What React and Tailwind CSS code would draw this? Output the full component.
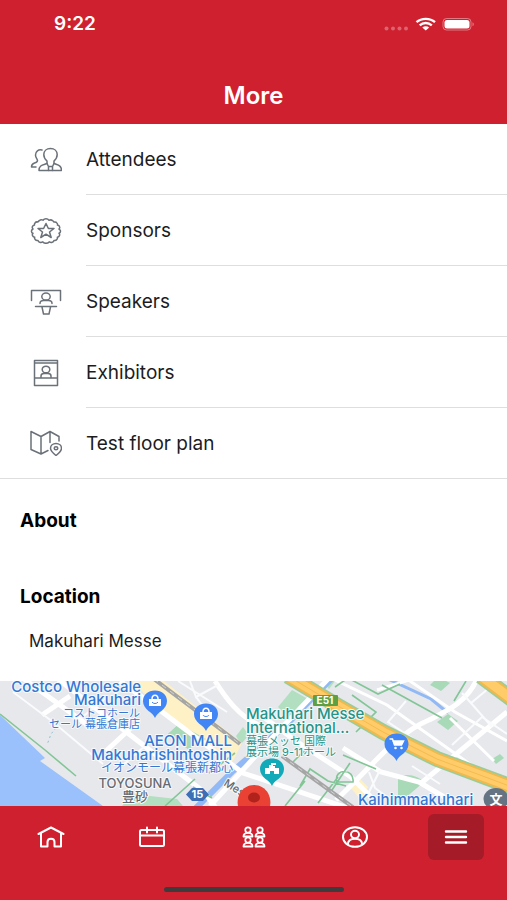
import { clsx } from 'clsx';

const svgProps = {
  fill: 'none',
  stroke: 'currentColor',
  strokeLinecap: 'round',
  strokeLinejoin: 'round',
  'aria-hidden': true,
};

function AttendeesIcon() {
  return (
    <svg viewBox="0 0 32 26" className="w-8 h-[26px]" strokeWidth="1.5" {...svgProps}>
      <path d="M20.500 1.500c-4 0-6.700 2.600-6.700 6 0 3.300 1.500 5 3.200 6.500v2.500c-4 1.500-8 1.500-8 7h22.500c0-5.500-4-5.500-7.500-7V14c1.700-1.500 3.200-3.200 3.200-6.500 0-3.400-2.700-6-6.700-6z" />
      <path d="M17 16.500l1.500 3v4M24 16.500l-1.500 3v4M18.500 19.500h4" />
      <path d="M12 3C8.500 2 5.500 4.500 5.500 8c0 2.500 1.500 3.500 2 5.500 0 1.500-1 2-3 2.500-2.500.8-3 1.800-3 4H6" />
    </svg>
  );
}

function SponsorsIcon() {
  return (
    <svg viewBox="0 0 32 26" className="w-8 h-[26px]" strokeWidth="1.5" {...svgProps}>
      <path d="M16 .8q2 0 3 1.500q2-1 3.500.3q1 .5 1.500 1.500q2-.5 3 1q.8 1 .5 2q2 .5 2.200 2q.2 1-.7 2q1.800 1 1.500 2.200q0 1.500-1.500 2q1 1 .5 2.200q-.4 1.500-2.200 1.700q.5 1.300-.5 2.300q-1 1.300-2.800.9q-.5 1.500-1.800 1.900q-1.500.5-3-.4q-1 1.400-3.200 1.400t-3.200-1.400q-1.500.9-3 .4q-1.300-.4-1.800-1.900q-1.800.4-2.800-.9q-1-1-.5-2.300q-1.800-.2-2.200-1.700q-.5-1.200.5-2.200Q1.500 15 1.500 13.500q-.3-1.500 1.500-2.500q-.9-1-.7-2q.2-1.500 2.200-2q-.3-1 .5-2q1-1.500 3-1q.5-1 1.500-1.500q1.500-1.300 3.500-.3q1-1.400 3-1.400z" />
      <path d="M16 5.500l2.400 5h5.600l-4.500 3.500 1.700 5.500-5.200-3.300-5.200 3.300 1.700-5.500L8 10.500h5.600z" />
    </svg>
  );
}

function SpeakersIcon() {
  return (
    <svg viewBox="0 0 32 26" className="w-8 h-[26px]" strokeWidth="1.5" {...svgProps}>
      <path d="M1.500 11.500V1.500h29v10" />
      <ellipse cx="16" cy="7.500" rx="4.200" ry="3.600" />
      <path d="M10 14.500c0-2 1-3 3.500-3h5c2.500 0 3.500 1 3.500 3M5.500 17.500h21M12 18l1.500 7h5.500l1.500-7" />
    </svg>
  );
}

function ExhibitorsIcon() {
  return (
    <svg viewBox="0 0 32 28" className="w-8 h-7" strokeWidth="1.500" {...svgProps}>
      <path d="M4.500 1.500h23v25h-23zM4.500 4h23M4.500 19h23" />
      <ellipse cx="16" cy="10.500" rx="3.800" ry="3.300" />
      <path d="M11 18.500V17c0-1.800 1-2.500 3-2.500h4c2 0 3 .7 3 2.500v1.500" />
    </svg>
  );
}

function FloorPlanIcon() {
  return (
    <svg viewBox="0 0 32 26" className="w-8 h-[26px]" strokeWidth="1.500" {...svgProps}>
      <path d="M18 20.500l-7 3.500-10-4.500V1.500l10 5 9-5 9 5V11M11 6.500V24M20 1.500v11" />
      <path d="M26 13.500c-3 0-5.500 2-5.500 4.800 0 2.700 3 5.200 5.500 7.200 2.500-2 5.500-4.500 5.500-7.200 0-2.800-2.500-4.800-5.500-4.800z" />
      <ellipse cx="26" cy="18.300" rx="1.800" ry="1.500" />
    </svg>
  );
}

function HomeIcon() {
  return (
    <svg viewBox="0 0 28 24" className="w-7 h-6" strokeWidth="2" {...svgProps}>
      <path d="M1.500 9L14 2.500 26.500 9M4 8v13.500h6.500V17c0-4.500 7-4.500 7 0v4.500H24V8" />
    </svg>
  );
}

function CalendarIcon() {
  return (
    <svg viewBox="0 0 28 24" className="w-7 h-6" strokeWidth="2" {...svgProps}>
      <rect x="2" y="5" width="24" height="16" rx="1.500" />
      <path d="M2 10.500h24M9 2.500v5M19 2.500v5" />
    </svg>
  );
}

function Person({ x, y }) {
  return (
    <g transform={`translate(${x} ${y})`}>
      <ellipse cx="0" cy="3" rx="2.700" ry="2.600" />
      <path d="M-4.500 9.500c0-2.500 1.500-3.700 4.500-3.700s4.500 1.200 4.500 3.700z" />
    </g>
  );
}

function NetworkIcon() {
  return (
    <svg viewBox="0 0 28 24" className="w-7 h-6" strokeWidth="1.800" {...svgProps}>
      <Person x={8} y={2} />
      <Person x={20} y={2} />
      <Person x={8} y={12} />
      <Person x={20} y={12} />
    </svg>
  );
}

function ProfileIcon() {
  return (
    <svg viewBox="0 0 28 24" className="w-7 h-6" strokeWidth="2" {...svgProps}>
      <ellipse cx="14" cy="12" rx="12" ry="9.800" />
      <ellipse cx="14" cy="9.500" rx="4" ry="3.700" />
      <path d="M6.800 19c.4-3.500 2.800-5.200 7.200-5.200s6.800 1.700 7.200 5.200" />
    </svg>
  );
}

function MenuIcon() {
  return (
    <svg viewBox="0 0 28 24" className="w-7 h-6" strokeWidth="2.400" {...svgProps}>
      <path d="M4 6.500h20M4 12h20M4 17.500h20" />
    </svg>
  );
}

const links = [
  { label: 'Attendees', icon: AttendeesIcon },
  { label: 'Sponsors', icon: SponsorsIcon },
  { label: 'Speakers', icon: SpeakersIcon },
  { label: 'Exhibitors', icon: ExhibitorsIcon },
  { label: 'Test floor plan', icon: FloorPlanIcon },
];

const tabs = [
  { label: 'Home', icon: HomeIcon },
  { label: 'Agenda', icon: CalendarIcon },
  { label: 'Networking', icon: NetworkIcon },
  { label: 'Profile', icon: ProfileIcon },
  { label: 'More', icon: MenuIcon, active: true },
];

function StatusBar() {
  return (
    <div className="flex items-center justify-between pl-[54px] pr-8 h-12">
      <span className="text-[19px] leading-6 font-semibold">9:22</span>
      <svg viewBox="0 0 91 16" className="w-[91px] h-4" fill="currentColor" aria-hidden="true">
        <g opacity="0.3">
          <circle cx="2.500" cy="12.500" r="2" />
          <circle cx="9" cy="12.500" r="2" />
          <circle cx="15.500" cy="12.500" r="2" />
          <circle cx="22" cy="12.500" r="2" />
        </g>
        <g fill="none" stroke="currentColor" strokeWidth="2.400">
          <path d="M32.500 6.200c5-4.400 13.500-4.400 18.500 0" />
          <path d="M35.700 9.300c3.500-3 8.600-3 12.100 0" />
        </g>
        <path d="M38.300 11.400c2-1.700 4.900-1.700 6.900 0L41.750 14.500z" />
        <rect x="59" y="2.500" width="28" height="11.500" rx="3.500" fill="none" stroke="currentColor" opacity="0.4" />
        <rect x="60.500" y="4" width="25" height="8.500" rx="2.500" />
        <path d="M88.500 6.300c1.800.6 1.800 3.400 0 4z" opacity="0.4" />
      </svg>
    </div>
  );
}

function Pin({ x, y, color, children }) {
  return (
    <g transform={`translate(${x} ${y})`}>
      <path d="M0 17C-2 11-12 9-12 0c0-6 5-10.500 12-10.500S12-6 12 0C12 9 2 11 0 17z" fill={color} />
      {children}
    </g>
  );
}

function Bag() {
  return (
    <g>
      <path d="M-6-2H6V5H-6z" fill="#fff" />
      <path d="M-3-2c0-5 6-5 6 0" fill="none" stroke="#fff" strokeWidth="1.500" />
      <path d="M-3 1c1 2 5 2 6 0" fill="none" stroke="#4285f4" />
    </g>
  );
}

function VenueMap() {
  return (
    <svg
      viewBox="0 0 507 125"
      preserveAspectRatio="xMidYMid slice"
      className="block w-full h-[125px] bg-[#e6e8ec] font-['Inter','Noto_Sans_CJK_JP',sans-serif]"
      role="img"
      aria-label="Map of Makuhari Messe"
    >
      {/* water and parks */}
      <path d="M0 34L45 77 40 80 103 125H0z" fill="#9ac1fb" />
      <path d="M122 125l10-12 45 5 6 7z" fill="#b2dfc0" />
      <path d="M168 53l11-10 27 15-18 10z" fill="#a9dab8" />
      <path d="M278 26l14-17 16 9-18 20z" fill="#b2dfc0" />
      <path d="M398 97c8-6 20-2 26 4l-26 22z" fill="#a9dab8" />
      <path d="M437 41l11-8 10 7-10 9zM430 4l8-8 12 6-9 8zM492 78l8-5 4 4-8 6z" fill="#a9dab8" />
      <path d="M236 55l7-9 6 8-8 9zM323 0h12l-6 8z" fill="#b2dfc0" />
      {/* canals */}
      <path d="M333-4L288 42 233 90 193 130" fill="none" stroke="#91b9f5" strokeWidth="6" />
      <path d="M388-2l43 20 17 14" fill="none" stroke="#91b9f5" strokeWidth="3" />
      {/* station area */}
      <path d="M130 0h34l78 62-9 18-31-18-35-30z" fill="#fff1c6" />
      <path d="M168 53l11-10 27 15-18 10z" fill="#a9dab8" />
      <path d="M350 106l10-8 8 8-8 12z" fill="#fff1c6" />
      {/* streets */}
      <g fill="none" stroke="#fff" strokeWidth="5">
        <path d="M58-2l14 11 132 102 12 16M24-2l65 47M120 0l33 24 90 68 105 35" />
        <path d="M106 70l26-24M70 15L42 34M210 125l62-68 57-60M215 0c10 16 24 36 46 45" />
        <path d="M477-2c-10 23-30 32-48 41-34 14-62 52-93 80M343 67l38 24 38 10 42 25M507 31L420 103" />
        <path d="M258 32l38 28 55 36 30 30" />
      </g>
      <g fill="none" stroke="#fff" strokeWidth="3">
        <path d="M333-2l54 26 94 67M377 9l45-14M410 0l45 31 52 29M450 37l44 43" />
      </g>
      <g fill="none" stroke="#fafbfc" strokeWidth="2">
        <path d="M178 0l49 31M190 0l6 16 22-12M196 16l13 17M369 91l6 16 24 18M380 89l-12 24M462 12l9 10 24-20M471 22l21 24M406 20l-18 21 30 20M452 64l30-28 25 17M412 85l28 18" />
        <path d="M13 11l40 30 50 42M80 38l27-22M153 58l-30 26" />
      </g>
      {/* green lines */}
      <g fill="none" stroke="#82c596" strokeWidth="1.600">
        <path d="M0 33l45 36 31 26M335 6l13-9 30 16 22-10M352 14l24 17-20 20M382 4l60 33M343 74l33 14M330 112l20-30M300 105l10-17 18 12 18 5M285 125l20-25M318 122l20-26M302 75l12-17M337 101c-4-14 18-14 16 0zM308 66l-15 15M466 0l-12 20" />
        <path d="M165 125l30-27M209 92l26-20M193 106l19 11" />
      </g>
      <path d="M56 47l-5 6-4 11" fill="none" stroke="#8fbfd0" strokeDasharray="2 3" />
      {/* railway */}
      <path d="M154-2l86 65M282 75l72 52" fill="none" stroke="#a5a5a5" strokeWidth="4" />
      <path d="M154-2l86 65M282 75l72 52" fill="none" stroke="#d4d4d4" strokeDasharray="5 5" />
      {/* expressway */}
      <g fill="none">
        <path d="M288-5l45 27 50 29 54 27 75 28M481-5l32 24" stroke="#99cc9b" strokeWidth="16" />
        <path d="M288-5l45 27 50 29 54 27 75 28M481-5l32 24" stroke="#efb94e" strokeWidth="13" />
        <path d="M288-5l45 27 50 29 54 27 75 28M481-5l32 24" stroke="#ffcc69" strokeWidth="9" />
        <path d="M288-5l45 27 50 29 54 27 75 28" stroke="#f4bb50" strokeWidth="1" />
      </g>
      {/* road shields */}
      <rect x="313" y="14" width="25" height="11" rx="1" fill="#5e9f42" />
      <text x="325" y="23" textAnchor="middle" fontSize="10" fontWeight="700" fill="#fff">E51</text>
      <path d="M192 107h11l6 6.500-6 6.500h-11l-6-6.500z" fill="#3c6fb5" />
      <text x="197.500" y="117" textAnchor="middle" fontSize="11" fontWeight="700" fill="#fff">15</text>

      <g stroke="#f7f9fb" strokeWidth="2" paintOrder="stroke" strokeLinejoin="round">
        <g fill="#3478d4" fontSize="15" fontWeight="500" textAnchor="end">
          <text x="141" y="11">Costco Wholesale</text>
          <text x="141" y="24">Makuhari</text>
          <text x="140" y="36" fontSize="11" fontWeight="400">コストコホール</text>
          <text x="140" y="47" fontSize="11" fontWeight="400">セール 幕張倉庫店</text>
          <text x="232" y="65">AEON MALL</text>
          <text x="232" y="79">Makuharishintoshin</text>
          <text x="233" y="91" fontSize="12" fontWeight="400">イオンモール幕張新都心</text>
        </g>
        <g fill="#259486" fontSize="15" fontWeight="500">
          <text x="246" y="38">Makuhari Messe</text>
          <text x="246" y="52">International...</text>
          <text x="246" y="64" fontSize="11" fontWeight="400">幕張メッセ 国際</text>
          <text x="246" y="75" fontSize="11" fontWeight="400">展示場 9-11ホール</text>
        </g>
        <g fill="#666a70" fontSize="13" fontWeight="500" textAnchor="middle">
          <text x="135" y="107">TOYOSUNA</text>
          <text x="135" y="120">豊砂</text>
          <text x="223" y="104" fontSize="11" textAnchor="start" transform="rotate(32 223 104)">Messe</text>
        </g>
        <text x="358" y="124" fill="#3478d4" fontSize="15" fontWeight="500">Kaihimmakuhari</text>
      </g>

      <Pin x={155} y={20} color="#4285f4"><Bag /></Pin>
      <Pin x={206} y={33} color="#4285f4"><Bag /></Pin>
      <Pin x={396.500} y={63} color="#4285f4">
        <path d="M-7-5h3l2 6h7l2-4H-3" fill="none" stroke="#fff" strokeWidth="1.500" />
        <path d="M-4-3H7L5 1h-7z" fill="#fff" />
        <circle cx="-1" cy="4" r="1.300" fill="#fff" />
        <circle cx="5" cy="4" r="1.300" fill="#fff" />
      </Pin>
      <Pin x={272} y={88} color="#12a9b8">
        <path d="M-7-1h4v-3h2v-2h5v2H1v1h2v2h4v6H2V2h-4v3h-5z" fill="#fff" />
      </Pin>
      <path d="M238 125c-1-5 0-9 2-13 3-5 8-8 14-8s11 3 14 8c2 4 3 8 2 13z" fill="#e94235" />
      <ellipse cx="254" cy="116.500" rx="6" ry="5" fill="#b0221b" />
      <ellipse cx="496" cy="118" rx="12.500" ry="11" fill="#657482" />
      <text x="496" y="123" textAnchor="middle" fontSize="13" fontWeight="700" fill="#fff">文</text>
    </svg>
  );
}

export default function App() {
  return (
    <div className="min-h-screen flex flex-col bg-white text-[#1c1c1e] font-['Inter','Noto_Sans_CJK_JP',sans-serif]">
      <header className="bg-[#cf202f] text-white">
        <StatusBar />
        <div className="h-[76px] flex items-end justify-center pb-3">
          <h1 className="text-2xl leading-8 font-semibold">More</h1>
        </div>
      </header>

      <main className="flex-1">
        <nav aria-label="Event pages">
          <ul>
            {links.map(({ label, icon: Icon }) => (
              <li key={label} className="group h-[71px] last:border-b last:border-[#dedede]">
                <a href="#" className="flex items-stretch h-full pl-[30px] gap-6">
                  <span className="w-8 flex items-center text-[#6b7178]">
                    <Icon />
                  </span>
                  <span className="flex-1 flex items-center pt-0.5 text-[19px] leading-6 border-b border-[#dedede] group-last:border-b-0">
                    {label}
                  </span>
                </a>
              </li>
            ))}
          </ul>
        </nav>

        <section className="px-5 pt-[30px]">
          <h2 className="text-[19px] leading-6 font-bold text-black">About</h2>
        </section>

        <section className="pt-[52px]">
          <h2 className="px-5 text-[19px] leading-6 font-bold text-black">Location</h2>
          <p className="px-[29px] pt-5 pb-7 text-[17px] leading-6">Makuhari Messe</p>
          <VenueMap />
        </section>
      </main>

      <footer className="bg-[#cf202f] text-white">
        <nav aria-label="Main" className="flex justify-between pt-2">
          {tabs.map(({ label, icon: Icon, active }) => (
            <div key={label} className="flex-1 flex justify-center">
              <button
                type="button"
                aria-label={label}
                aria-current={active ? 'page' : undefined}
                className={clsx('w-14 h-[46px] rounded-md flex items-center justify-center', active && 'bg-[#a51b27]')}
              >
                <Icon />
              </button>
            </div>
          ))}
        </nav>
        <div className="flex justify-center pt-[27px] pb-2">
          <div className="w-[180px] h-[5px] rounded-full bg-[#403a3c]" />
        </div>
      </footer>
    </div>
  );
}
